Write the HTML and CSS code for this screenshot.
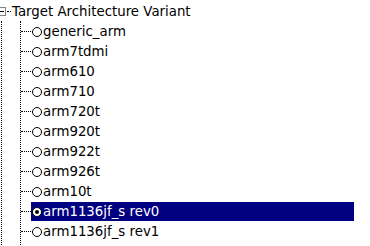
FILE: index.html
```html
<!DOCTYPE html>
<html lang="en">
<head>
  <meta charset="UTF-8" />
  <title>Target Architecture Variant</title>
  <link rel="stylesheet" href="styles.css">
</head>
<body>
  <div class="tree">
    <div class="row root">
      <span class="expander"><span class="minus"></span></span>
      <span class="stub short"></span>
      <span class="label">Target Architecture Variant</span>
    </div>

    <div class="branch">
      <ul class="children">
        <li class="row"><span class="stub"></span><span class="item"><span class="radio"></span><span class="label">generic_arm</span></span></li>
        <li class="row"><span class="stub"></span><span class="item"><span class="radio"></span><span class="label">arm7tdmi</span></span></li>
        <li class="row"><span class="stub"></span><span class="item"><span class="radio"></span><span class="label">arm610</span></span></li>
        <li class="row"><span class="stub"></span><span class="item"><span class="radio"></span><span class="label">arm710</span></span></li>
        <li class="row"><span class="stub"></span><span class="item"><span class="radio"></span><span class="label">arm720t</span></span></li>
        <li class="row"><span class="stub"></span><span class="item"><span class="radio"></span><span class="label">arm920t</span></span></li>
        <li class="row"><span class="stub"></span><span class="item"><span class="radio"></span><span class="label">arm922t</span></span></li>
        <li class="row"><span class="stub"></span><span class="item"><span class="radio"></span><span class="label">arm926t</span></span></li>
        <li class="row"><span class="stub"></span><span class="item"><span class="radio"></span><span class="label">arm10t</span></span></li>
        <li class="row"><span class="stub"></span><span class="item selected"><span class="radio checked"></span><span class="label">arm1136jf_s rev0</span></span></li>
        <li class="row"><span class="stub"></span><span class="item"><span class="radio"></span><span class="label">arm1136jf_s rev1</span></span></li>
      </ul>
    </div>
  </div>
</body>
</html>
```

FILE: styles.css
```css
body {
  margin: 0;
  background: #fff;
  font-family: "DejaVu Sans", sans-serif;
  font-size: 13.33px;
  color: #000;
  overflow: hidden;
}

.tree {
  padding-top: 1px;
}

.row {
  display: flex;
  align-items: center;
  height: 20px;
  white-space: nowrap;
}

.root .label {
  margin-left: 1px;
}

.expander {
  display: flex;
  align-items: center;
  justify-content: center;
  box-sizing: border-box;
  width: 9px;
  height: 9px;
  margin-left: -3px;
  border: 1px solid #808080;
  background: #fff;
}

.minus {
  display: block;
  width: 5px;
  height: 1px;
  background: #000;
}

.stub {
  display: block;
  width: 10px;
  height: 0;
  border-top: 1px dotted #000;
}

.stub.short {
  width: 4px;
  margin-left: 1px;
}

.branch {
  margin-left: 1px;
  border-left: 1px dotted #000;
}

.children {
  list-style: none;
  margin: 0 0 0 18px;
  padding: 0 0 10px 0;
  border-left: 1px dotted #000;
}

.item {
  display: flex;
  align-items: center;
  height: 19px;
  margin-top: 1px;
  padding-left: 1px;
}

.item.selected {
  width: 322px;
  background: #000080;
  color: #fff;
}

.radio {
  display: flex;
  align-items: center;
  justify-content: center;
  box-sizing: border-box;
  width: 10px;
  height: 10px;
  margin-right: 1px;
  border: 1px solid #000;
  border-radius: 50%;
  background: #fff;
}

.radio.checked::after {
  content: "";
  display: block;
  width: 4px;
  height: 4px;
  border-radius: 50%;
  background: #000;
}
```
